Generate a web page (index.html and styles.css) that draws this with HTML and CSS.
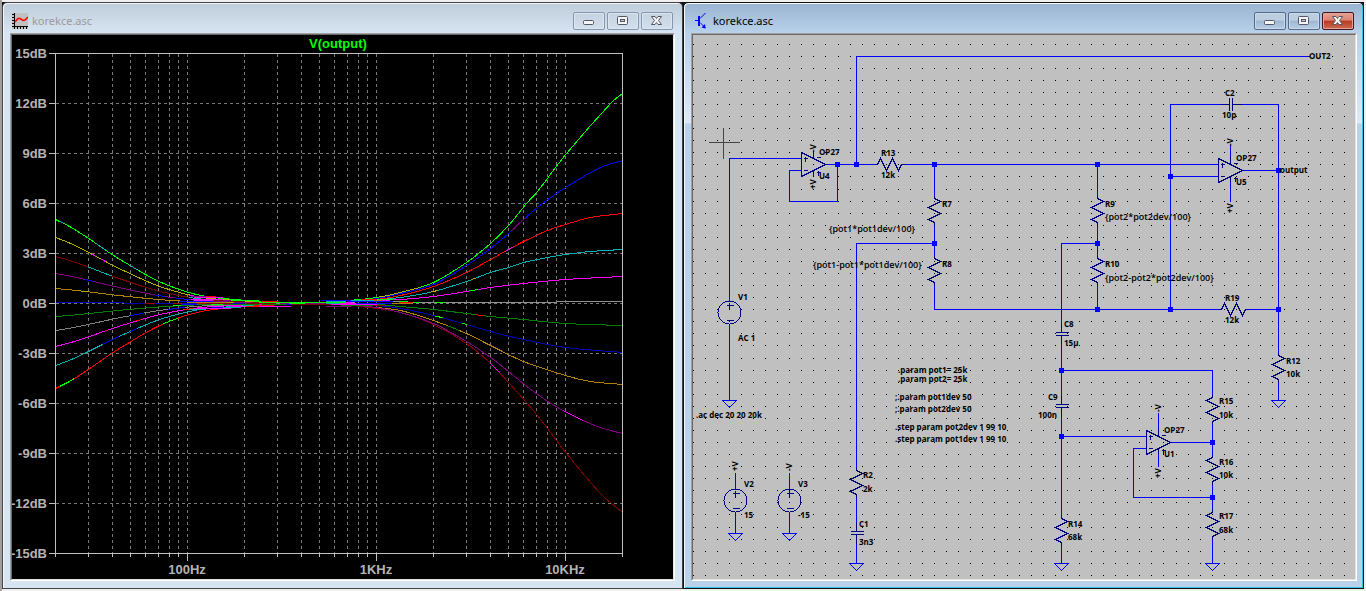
FILE: index.html
```html
<!DOCTYPE html>
<html lang="en">
<head>
<meta charset="utf-8">
<title>korekce.asc</title>
<link rel="stylesheet" href="styles.css">
</head>
<body>
<main class="workspace">
  <section class="window window-inactive" aria-label="Waveform window">
    <header class="titlebar">
      <svg class="app-icon" viewBox="0 0 16 16" aria-hidden="true">
        <rect width="16" height="16" fill="#c0c0c0"/>
        <g shape-rendering="crispEdges"><path d="M2.500 0V16M0 13.500H16M0 1.500h2M0 4.500h2M0 7.500h2M0 10.500h2M5.500 14v2M8.500 14v2M11.500 14v2M14.500 14v2" stroke="#000" fill="none"/></g>
        <path d="M3 9L6 5.500L8 5.500L11 7.500L13 7L16 4" stroke="#f00" stroke-width="1.600" fill="none"/>
      </svg>
      <h1 class="title">korekce.asc</h1>
      <div class="controls">
        <button class="control" type="button" aria-label="Minimize"><svg viewBox="0 0 30 16"><rect class="glyph" x="9.500" y="7.500" width="10" height="4" rx="1"/></svg></button>
        <button class="control" type="button" aria-label="Maximize"><svg viewBox="0 0 30 16"><rect class="glyph" x="9.500" y="3.500" width="10" height="8" rx="1"/><rect class="glyph-inner" x="12.500" y="6.500" width="4" height="2"/></svg></button>
        <button class="control" type="button" aria-label="Close"><svg viewBox="0 0 30 16"><path class="glyph" d="M9.500 3.500h3.500l1.500 2l1.500-2h3.500l-3 4l3 4h-3.500l-1.500-2l-1.500 2h-3.500l3-4z"/></svg></button>
      </div>
    </header>
    <div class="viewport">
      <svg class="canvas plot" viewBox="12 35 661 544" role="img" aria-label="V(output) frequency response">
        <g class="crisp" transform="translate(0.5 0.5)">
          <path class="gridline" d="M55 103H622M55 153H622M55 203H622M55 253H622M55 303H622M55 353H622M55 403H622M55 453H622M55 503H622M88 53V553M112 53V553M130 53V553M145 53V553M158 53V553M169 53V553M178 53V553M187 53V553M244 53V553M277 53V553M301 53V553M319 53V553M334 53V553M347 53V553M358 53V553M367 53V553M376 53V553M433 53V553M466 53V553M490 53V553M508 53V553M523 53V553M536 53V553M547 53V553M556 53V553M565 53V553"/>
          <g id="traces"></g>
          <path class="axis" d="M48 53H622V556M55 53V556M48 553H622M48 103H55M48 153H55M48 203H55M48 253H55M48 303H55M48 353H55M48 403H55M48 453H55M48 503H55M88 553v3M112 553v3M130 553v3M145 553v3M158 553v3M169 553v3M178 553v3M187 553v7M244 553v3M277 553v3M301 553v3M319 553v3M334 553v3M347 553v3M358 553v3M367 553v3M376 553v7M433 553v3M466 553v3M490 553v3M508 553v3M523 553v3M536 553v3M547 553v3M556 553v3M565 553v7"/>
        </g>
        <g class="y-labels">
          <text x="47" y="58">15dB</text><text x="47" y="108">12dB</text><text x="47" y="158">9dB</text><text x="47" y="208">6dB</text><text x="47" y="258">3dB</text><text x="47" y="308">0dB</text><text x="47" y="358">-3dB</text><text x="47" y="408">-6dB</text><text x="47" y="458">-9dB</text><text x="47" y="508">-12dB</text><text x="47" y="558">-15dB</text>
        </g>
        <g class="x-labels">
          <text x="187" y="574">100Hz</text><text x="376" y="574">1KHz</text><text x="565" y="574">10KHz</text>
          <text class="trace-name" x="338" y="48">V(output)</text>
        </g>
      </svg>
    </div>
  </section>

  <section class="window window-active" aria-label="Schematic window">
    <header class="titlebar">
      <svg class="app-icon" viewBox="0 0 16 16" aria-hidden="true">
        <g stroke="#00f" fill="none" shape-rendering="crispEdges"><path d="M2 7.500H6"/><path d="M6 3V13" stroke-width="2"/><path d="M7 5.500L12.500 0M7 9.500L12.500 15" shape-rendering="auto"/></g>
        <path d="M12.500 15.500L12 11L8.500 14.500Z" fill="#00f"/>
      </svg>
      <h2 class="title">korekce.asc</h2>
      <div class="controls">
        <button class="control" type="button" aria-label="Minimize"><svg viewBox="0 0 30 16"><rect class="glyph" x="9.500" y="7.500" width="10" height="4" rx="1"/></svg></button>
        <button class="control" type="button" aria-label="Maximize"><svg viewBox="0 0 30 16"><rect class="glyph" x="9.500" y="3.500" width="10" height="8" rx="1"/><rect class="glyph-inner" x="12.500" y="6.500" width="4" height="2"/></svg></button>
        <button class="control control-close" type="button" aria-label="Close"><svg viewBox="0 0 30 16"><path class="glyph" d="M9.500 3.500h3.500l1.500 2l1.500-2h3.500l-3 4l3 4h-3.500l-1.500-2l-1.500 2h-3.500l3-4z"/></svg></button>
      </div>
    </header>
    <div class="viewport">
      <svg class="canvas schematic" viewBox="693 35 662 544" role="img" aria-label="Tone control schematic">
        <defs>
          <path id="res" d="M0 -3V0L6 3L-6 9L6 15L-6 21L0 24V27"/>
          <path id="cap" d="M-6 0H7M-6 3H7M0 -9V0M0 3V12"/>
          <g id="source"><circle r="11.500"/><path d="M-3 -7H4M0 -10V-3M-3 8H4"/></g>
          <path id="opamp" d="M0 -12V12L24 0ZM2 -6H6M4 -8V-3M2 6H6M15 -7H19M15 8H19M17 6V11M12 -14V-6M12 6V11"/>
          <path id="gnd" d="M-7 0H7L0 7Z"/>
          <rect id="node" x="-2.500" y="-2.500" width="5" height="5"/>
        </defs>
        <g class="crisp" transform="translate(0.5 0.5)">
          <path id="dots" class="dots"/>
          <path class="cursor" d="M723 127V158M708 142H739"/>
          <path class="wire" d="M729 300V158H801M729 324V400M801 170H789V201H837V164M825 164H875M856 164V56H1309M903 164H1218M934 164V196M934 224V256M934 284V309H1219M1247 309H1278M934 243H856V468M856 496V522M856 543V563M1097 164V196M1097 224V256M1097 284V309M1097 243H1061V323M1061 344V395M1061 416V516M1061 370H1212V395M1212 423V455M1212 483V510M1212 538V563M1061 436H1146M1146 448H1133V497H1212M1170 442H1212M1061 544V563M1170 309V104H1220M1241 104H1278V353M1170 176H1218M1242 170H1278M1278 381V400M735 472V488M735 512V533M789 472V488M789 512V533M1230 144V156M1230 180V201M1158 412V428M1158 452V466"/>
          <g class="part">
            <use href="#res" x="934" y="198"/><use href="#res" x="934" y="258"/>
            <use href="#res" x="1097" y="198"/><use href="#res" x="1097" y="258"/>
            <use href="#res" x="856" y="470"/><use href="#res" x="1061" y="518"/><use href="#res" x="1278" y="355"/>
            <use href="#res" transform="translate(1212 397) scale(-1 1)"/><use href="#res" transform="translate(1212 457) scale(-1 1)"/><use href="#res" transform="translate(1212 512) scale(-1 1)"/>
            <use href="#res" transform="translate(877 164) rotate(-90)"/><use href="#res" transform="translate(1221 309) rotate(-90)"/>
            <use href="#cap" x="856" y="531"/><use href="#cap" x="1061" y="332"/><use href="#cap" x="1061" y="404"/>
            <use href="#cap" transform="translate(1229 104) rotate(-90)"/>
            <use href="#source" x="729" y="312"/><use href="#source" x="735" y="500"/><use href="#source" x="789" y="500"/>
            <use href="#opamp" x="801" y="164"/><use href="#opamp" x="1218" y="170"/><use href="#opamp" x="1146" y="442"/>
          </g>
          <g class="ground">
            <use href="#gnd" x="729" y="400"/><use href="#gnd" x="735" y="533"/><use href="#gnd" x="789" y="533"/><use href="#gnd" x="856" y="563"/><use href="#gnd" x="1061" y="563"/><use href="#gnd" x="1212" y="563"/><use href="#gnd" x="1278" y="400"/>
          </g>
          <g class="nodes">
            <use href="#node" x="837" y="164"/><use href="#node" x="856" y="164"/><use href="#node" x="934" y="164"/><use href="#node" x="934" y="243"/><use href="#node" x="1097" y="164"/><use href="#node" x="1097" y="243"/><use href="#node" x="1097" y="309"/><use href="#node" x="1170" y="309"/><use href="#node" x="1278" y="309"/><use href="#node" x="1170" y="176"/><use href="#node" x="1278" y="170"/><use href="#node" x="1061" y="370"/><use href="#node" x="1061" y="436"/><use href="#node" x="1212" y="442"/><use href="#node" x="1212" y="497"/>
          </g>
        </g>
        <g class="label">
          <text x="819" y="155">OP27</text><text x="819" y="179">U4</text>
          <text x="881" y="156">R13</text><text x="881" y="178">12k</text>
          <text x="942" y="207">R7</text><text class="expression" x="829" y="232">{pot1*pot1dev/100}</text>
          <text class="expression" x="813" y="268">{pot1-pot1*pot1dev/100}</text><text x="942" y="267">R8</text>
          <text x="738" y="300">V1</text><text x="738" y="341">AC 1</text>
          <text x="696" y="418">.ac dec 20 20 20k</text>
          <text x="744" y="487">V2</text><text x="744" y="518">15</text>
          <text x="798" y="487">V3</text><text x="798" y="518">-15</text>
          <text x="863" y="478">R2</text><text x="863" y="492">2k</text>
          <text x="859" y="527">C1</text><text x="859" y="545">3n3</text>
          <text x="898" y="373">.param pot1= 25k</text><text x="898" y="382">.param pot2= 25k</text>
          <text x="895" y="400">;.param pot1dev 50</text><text x="895" y="412">;.param pot2dev 50</text>
          <text x="895" y="430">.step param pot2dev 1 99 10</text><text x="895" y="442">.step param pot1dev 1 99 10</text>
          <text x="1309" y="59">OUT2</text>
          <text x="1225" y="96">C2</text><text x="1222" y="118">10p</text>
          <text x="1236" y="161">OP27</text><text x="1236" y="185">U5</text><text x="1280" y="173">output</text>
          <text x="1105" y="207">R9</text><text class="expression" x="1105" y="220">{pot2*pot2dev/100}</text>
          <text x="1105" y="267">R10</text><text class="expression" x="1105" y="281">{pot2-pot2*pot2dev/100}</text>
          <text x="1225" y="301">R19</text><text x="1225" y="323">12k</text>
          <text x="1064" y="327">C8</text><text x="1064" y="346">15µ</text>
          <text x="1286" y="364">R12</text><text x="1286" y="377">10k</text>
          <text x="1048" y="400">C9</text><text x="1038" y="418">100n</text>
          <text x="1164" y="433">OP27</text><text x="1164" y="457">U1</text>
          <text x="1219" y="404">R15</text><text x="1219" y="418">10k</text>
          <text x="1219" y="465">R16</text><text x="1219" y="478">10k</text>
          <text x="1219" y="519">R17</text><text x="1219" y="533">68k</text>
          <text x="1068" y="527">R14</text><text x="1068" y="540">68k</text>
          <text transform="translate(816 152) rotate(-90)">-V</text><text transform="translate(816 189) rotate(-90)">+V</text>
          <text transform="translate(1233 146) rotate(-90)">-V</text><text transform="translate(1233 213) rotate(-90)">+V</text>
          <text transform="translate(1161 412) rotate(-90)">-V</text><text transform="translate(1161 478) rotate(-90)">+V</text>
          <text transform="translate(738 471) rotate(-90)">+V</text><text transform="translate(792 471) rotate(-90)">-V</text>
        </g>
      </svg>
    </div>
  </section>
</main>
<script src="main.js"></script>
</body>
</html>
```
FILE: styles.css
```css
* { box-sizing: border-box; }

body {
  margin: 0;
  padding: 2px;
  background: #f0f0f0;
  font-family: "Noto Sans", "Open Sans", sans-serif;
  box-shadow: inset 2px 0 #a0a0a0;
}

.workspace {
  display: grid;
  grid-template-columns: minmax(0, 1fr) minmax(0, 1fr);
  background: #111;
}

.window {
  border: 1px solid #444;
  border-radius: 5px 5px 0 0;
  padding: 0 7px 7px;
}

.window-inactive {
  background: linear-gradient(#bfcddb, #d7e4f2 30px);
  box-shadow: inset 1px 1px #f4f8fc;
}

.window-active {
  border-color: #111;
  padding-right: 6px;
  background: linear-gradient(#99b4d1, #b9d1ea 30px, #dce9f7 120px, #b9d1ea 121px);
  box-shadow: inset 1px 1px #f4f8fc, inset -1px -1px #35c6e6;
}

.titlebar {
  display: flex;
  align-items: center;
  gap: 4px;
  padding: 9px 2px 3px;
}

.window-active .titlebar { padding-right: 3px; }

.app-icon { width: 16px; height: 16px; }

.title {
  flex: 1;
  margin: 0;
  font-size: 11px;
  font-weight: 400;
  line-height: 18px;
  color: #000;
}

.window-inactive .title { color: #9a9a9a; }

.controls { display: flex; gap: 2px; }

.control {
  width: 32px;
  height: 18px;
  padding: 0;
  border: 1px solid #8496b0;
  border-radius: 2px;
  background: linear-gradient(#c5d2e0, #d3dfec);
  box-shadow: inset 0 0 0 1px #dbe6f1;
}

.control svg { display: block; width: 30px; height: 16px; }

.window-active .control {
  border-color: #56698a;
  background: linear-gradient(#bccde0 45%, #9fb7d2 50%, #b6cde6);
  box-shadow: inset 0 0 0 1px #c8d9ea;
}

.window-active .control-close {
  border-color: #431422;
  background: linear-gradient(#e6a092, #d98472 45%, #b83a22 50%, #cf6a50);
  box-shadow: inset 0 0 0 1px #e5a497;
}

.glyph { fill: #f4f4f4; stroke: #535666; }
.glyph-inner { fill: #b9cbe0; stroke: #535666; }

.viewport {
  border: 1px solid;
  border-color: #a0a0a0 #fff #fff #a0a0a0;
}

.canvas {
  display: block;
  width: 100%;
  height: auto;
  border: 1px solid;
  border-color: #696969 #e3e3e3 #e3e3e3 #696969;
}

.crisp { shape-rendering: crispEdges; fill: none; }

.plot { background: #000; }
.gridline { stroke: #787878; stroke-dasharray: 3 3; }
.axis { stroke: #c0c0c0; }

.y-labels, .x-labels {
  fill: #b4b4b4;
  font-family: "Liberation Sans", Arial, sans-serif;
  font-size: 13px;
  font-weight: 700;
}

.y-labels { text-anchor: end; }
.x-labels { text-anchor: middle; }
.trace-name { fill: #0f0; }

.schematic { background: #c0c0c0; }
.dots { stroke: #000; }
.cursor { stroke: #444; }
.wire, .ground { stroke: #00f; }
.part { stroke: #000080; }
.nodes { fill: #00f; }

.label {
  fill: #000;
  font-family: "Open Sans", "Noto Sans", sans-serif;
  font-size: 8px;
  font-weight: 700;
}

.expression { font-size: 9px; font-weight: 600; }
```
FILE: main.js
```js
const SVG_NS = "http://www.w3.org/2000/svg";
const traces = document.getElementById("traces");

function smoothPath(points) {
  let d = `M${points[0][0]} ${points[0][1]}`;
  for (let i = 0; i < points.length - 1; i++) {
    const p0 = points[i - 1] || points[i];
    const p1 = points[i];
    const p2 = points[i + 1];
    const p3 = points[i + 2] || p2;
    const step = (p2[0] - p1[0]) / 3;
    const slope = (a, b) => (b[1] - a[1]) / (b[0] - a[0]);
    const m1 = slope(p0, p2);
    const m2 = slope(p1, p3);
    d += `C${p1[0] + step} ${p1[1] + m1 * step} ${p2[0] - step} ${p2[1] - m2 * step} ${p2[0]} ${p2[1]}`;
  }
  return d;
}

function addTrace(points, color, accent, dashes) {
  const d = smoothPath(points);
  const layers = [[color, null], [accent, dashes]];
  for (const [stroke, dash] of layers) {
    if (!stroke) continue;
    const path = document.createElementNS(SVG_NS, "path");
    path.setAttribute("d", d);
    path.setAttribute("stroke", stroke);
    if (dash) path.setAttribute("stroke-dasharray", dash);
    traces.appendChild(path);
  }
}

// Bass side: start level at 20 Hz, then decay towards 0 dB.
const decay = [[55, 1], [70, 0.91], [88, 0.775], [112, 0.58], [130, 0.45], [145, 0.345], [158, 0.265], [169, 0.21], [187, 0.135], [205, 0.085], [222, 0.06], [260, 0.025], [300, 0.008], [330, 0]];
const bass = [
  [302, "#0000b0", "#a00000", "0 90 10 18 9 14 10 400"],
  [288, "#b08000", "#b0b000", "0 24 10 140 12 400"],
  [316, "#008000", "#0f0", "0 118 8 30 14 400"],
  [330, "#808080", "#00f", "0 76 14 24 18 400"],
  [273, "#800080", "#00f", "0 30 8 64 10 10 14 400"],
  [256, "#800000", "#00b0b0", "0 34 26 80 12 400"],
  [346, "#f0f", "#f00", "0 52 3 30 5 44 9 400"],
  [365, "#00b0b0", "#00f", "0 52 18 12 8 400"],
  [237, "#b0b000", "#f0f", "0 40 5 5 6 90 12 400"],
  [388, "#f00", "#0f0", "0 5 16 105 16 400"],
  [219, "#0f0", "#00b0b0", "0 5 4 38 12 28 10 400"]
];
for (const [start, color, accent, dashes] of bass) {
  addTrace(decay.map(([x, k]) => [x, 303 + (start - 303) * k]), color, accent, dashes);
}

// Treble side: points read along each swept response up to 20 kHz.
const treble = [
  [[[290, 303], [340, 302], [376, 301], [433, 302], [490, 302], [622, 301]], "#909090", "#0f0", "0 110 20 15 10 400"],
  [[[290, 303], [340, 304], [376, 304], [400, 306], [433, 309], [466, 313], [490, 316], [523, 319], [565, 323], [622, 325]], "#008000", "#f00", "0 186 8 400"],
  [[[290, 303], [340, 304], [376, 305], [400, 308], [433, 315], [466, 324], [490, 331], [523, 339], [565, 347], [622, 352]], "#0000b0", "#0f0", "0 146 8 20 5 400"],
  [[[290, 303], [340, 302], [376, 300], [400, 299], [433, 296], [466, 291], [490, 287], [523, 283], [565, 279], [622, 276]], "#f0f", "#0f0", "0 180 8 400"],
  [[[290, 303], [340, 302], [376, 299], [400, 297], [433, 291], [466, 281], [490, 272], [508, 267], [523, 262], [547, 257], [565, 254], [590, 251], [622, 249]], "#00b0b0", "#b0b000", "0 140 8 36 5 400"],
  [[[290, 303], [340, 302], [376, 299], [400, 295], [433, 286], [466, 272], [490, 259], [508, 249], [523, 241], [547, 230], [565, 224], [590, 217], [622, 213]], "#f00", "#f0f", "0 224 10 400"],
  [[[290, 303], [340, 302], [376, 298], [400, 293], [433, 284], [466, 265], [490, 248], [508, 233], [523, 219], [542, 203], [565, 187], [600, 167], [622, 160]], "#00f", "#800080", "0 240 18 400"],
  [[[290, 303], [340, 304], [376, 307], [400, 310], [433, 320], [466, 333], [490, 345], [523, 361], [565, 375], [590, 381], [622, 384]], "#b08000", "#008000", "0 160 12 400"],
  [[[290, 303], [340, 304], [376, 308], [400, 312], [433, 324], [466, 343], [490, 363], [517, 392], [537, 415], [566, 453], [600, 493], [622, 512]], "#800000", "#f0f", "0 215 14 400"],
  [[[290, 303], [340, 304], [376, 307], [400, 312], [433, 323], [466, 341], [490, 357], [508, 371], [533, 391], [557, 407], [587, 422], [603, 428], [622, 433]], "#800080", "#f0f", "0 302 22 400"],
  [[[290, 303], [340, 301], [376, 297], [400, 292], [433, 282], [466, 262], [490, 243], [508, 225], [526, 203], [537, 191], [566, 153], [611, 102], [622, 93]], "#0f0", "#b0b000", "0 90 40 400"]
];
for (const [points, color, accent, dashes] of treble) {
  addTrace(points, color, accent, dashes);
}

// Coloured runs where the sweeps lie over each other near 0 dB.
const overlaps = [
  ["#800080", "M222 300H258M190 296H205M325 306H350"],
  ["#f0f", "M190 299H222M193 297H222M193 300H212M195 308H230M230 306H290M320 304H376M340 303H370M330 302H350"],
  ["#00f", "M178 301H212M210 307H222M280 304H300M350 301H392M355 303H391M180 304H196M320 300H352"],
  ["#b08000", "M187 302H222M222 304H250M340 305H360M391 303H410M352 300H380"],
  ["#f00", "M205 296H215M245 306H258M260 301H277M398 302H412M358 299H372"],
  ["#800000", "M290 304H330M370 305H384M245 303H275M205 303H230"],
  ["#008000", "M222 304H258M340 305H372M260 304H285"],
  ["#0f0", "M230 300H258M258 302H345M376 299H392M353 299H360"],
  ["#00b0b0", "M325 301H345M350 300H372M222 307H240M325 303H338M188 309H205"]
];
for (const [stroke, d] of overlaps) {
  const path = document.createElementNS(SVG_NS, "path");
  path.setAttribute("d", d);
  path.setAttribute("stroke", stroke);
  traces.appendChild(path);
}

// Schematic grid points.
const pitch = 12.07;
let dots = "";
for (let row = 0; row < 45; row++) {
  const y = Math.floor(44.2 + row * pitch);
  for (let col = 0; col < 55; col++) {
    dots += `M${Math.floor(693.2 + col * pitch) - 0.5} ${y}h1`;
  }
}
document.getElementById("dots").setAttribute("d", dots);
```
